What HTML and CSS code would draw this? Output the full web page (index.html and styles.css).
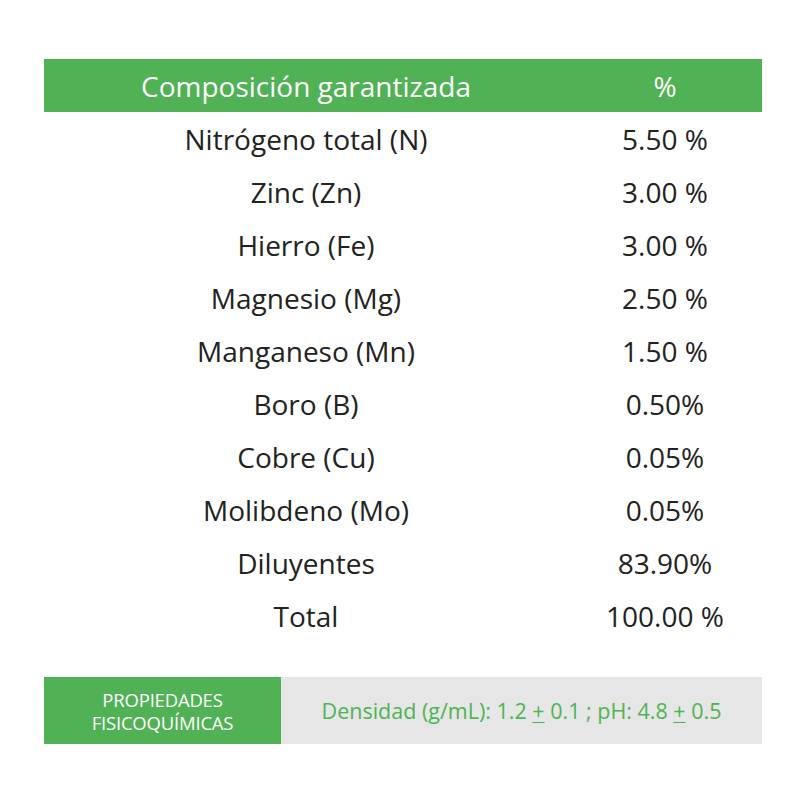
FILE: index.html
```html
<!DOCTYPE html>
<html lang="es">
<head>
<meta charset="utf-8">
<title>Composición garantizada</title>
<link rel="stylesheet" href="styles.css">
</head>
<body>
<div class="page">
  <div class="table">
    <div class="row head">
      <div class="c1">Composición garantizada</div>
      <div class="c2">%</div>
    </div>
    <div class="row"><div class="c1">Nitrógeno total (N)</div><div class="c2">5.50 %</div></div>
    <div class="row"><div class="c1">Zinc (Zn)</div><div class="c2">3.00 %</div></div>
    <div class="row"><div class="c1">Hierro (Fe)</div><div class="c2">3.00 %</div></div>
    <div class="row"><div class="c1">Magnesio (Mg)</div><div class="c2">2.50 %</div></div>
    <div class="row"><div class="c1">Manganeso (Mn)</div><div class="c2">1.50 %</div></div>
    <div class="row"><div class="c1">Boro (B)</div><div class="c2">0.50%</div></div>
    <div class="row"><div class="c1">Cobre (Cu)</div><div class="c2">0.05%</div></div>
    <div class="row"><div class="c1">Molibdeno (Mo)</div><div class="c2">0.05%</div></div>
    <div class="row"><div class="c1">Diluyentes</div><div class="c2">83.90%</div></div>
    <div class="row"><div class="c1">Total</div><div class="c2">100.00 %</div></div>
  </div>
  <div class="props">
    <div class="props-label">PROPIEDADES<br>FISICOQUÍMICAS</div>
    <div class="props-value"><span>Densidad (g/mL): 1.2 <u>+</u> 0.1 ; pH: 4.8 <u>+</u> 0.5</span></div>
  </div>
</div>
</body>
</html>
```

FILE: styles.css
```css
html, body {
  margin: 0;
  padding: 0;
  background: #ffffff;
}
body {
  font-family: "Open Sans", "Noto Sans", sans-serif;
  color: #222222;
}
.page {
  width: 718px;
  padding: 59px 0 0 44px;
}
.table {
  display: flex;
  flex-direction: column;
}
.row {
  display: grid;
  grid-template-columns: 524px 194px;
  height: 53px;
  align-items: center;
  font-size: 28px;
  text-align: center;
}
.row.head {
  background: #51b155;
  color: #ffffff;
  font-size: 28px;
}
.props {
  margin-top: 35px;
  display: grid;
  grid-template-columns: 237px 481px;
  height: 67px;
}
.props-label {
  background: #51b155;
  color: #ffffff;
  font-size: 18.5px;
  line-height: 23px;
  letter-spacing: -0.2px;
  display: flex;
  align-items: center;
  justify-content: center;
  text-align: center;
}
.props-value {
  background: #e6e6e6;
  color: #4db453;
  font-size: 21.5px;
  display: flex;
  align-items: center;
  justify-content: center;
}
.props-value u {
  text-decoration-thickness: 1px;
  text-underline-offset: 3px;
}
```
